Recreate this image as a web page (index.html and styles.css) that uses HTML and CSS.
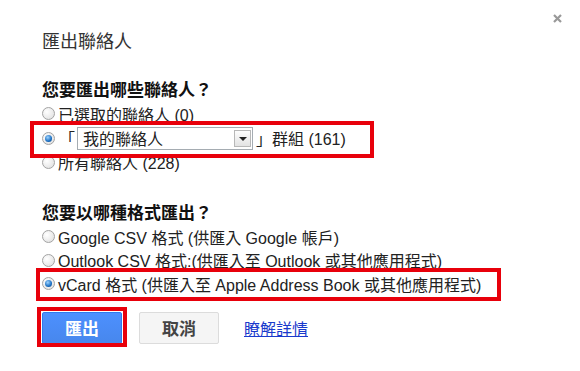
FILE: index.html
```html
<!DOCTYPE html>
<html lang="zh-Hant">
  <head>
    <meta charset="UTF-8" />
    <meta name="viewport" content="width=device-width, initial-scale=1.0" />
    <title>匯出聯絡人</title>
    <link rel="stylesheet" href="styles.css">
  </head>
  <body>
    <div class="dialog">
      <span class="close">
        <svg width="9" height="9" viewBox="0 0 9 9">
          <path d="M1 1 L8 8 M8 1 L1 8" stroke="#999" stroke-width="2.2" />
        </svg>
      </span>
      <div class="title">匯出聯絡人</div>

      <div class="question">您要匯出哪些聯絡人？</div>
      <div class="option"><span class="radio"></span>已選取的聯絡人 (0)</div>
      <div class="option group">
        <span class="radio on"></span>
        <span class="bracket">「</span>
        <div class="select">
          <span class="value">我的聯絡人</span>
          <span class="arrow"></span>
        </div>
        <span class="bracket end">」</span><span>群組 (161)</span>
      </div>
      <div class="option"><span class="radio"></span>所有聯絡人 (228)</div>

      <div class="question second">您要以哪種格式匯出？</div>
      <div class="option"><span class="radio"></span>Google CSV 格式 (供匯入 Google 帳戶)</div>
      <div class="option"><span class="radio"></span>Outlook CSV 格式:(供匯入至 Outlook 或其他應用程式)</div>
      <div class="option"><span class="radio on"></span>vCard 格式 (供匯入至 Apple Address Book 或其他應用程式)</div>

      <div class="actions">
        <button class="btn primary">匯出</button>
        <button class="btn">取消</button>
        <a href="#" class="more">瞭解詳情</a>
      </div>

      <!-- red highlight boxes drawn over the dialog -->
      <div class="mark mark-group"></div>
      <div class="mark mark-vcard"></div>
      <div class="mark mark-export"></div>
    </div>
  </body>
</html>
```

FILE: styles.css
```css
body {
  margin: 0;
  background: #fff;
  font-family: "Liberation Sans", "Noto Sans CJK TC", sans-serif;
  color: #222;
}
.dialog {
  position: relative;
  width: 580px;
  height: 371px;
  padding: 30px 0 0 42px;
  box-sizing: border-box;
}
.close {
  position: absolute;
  top: 14px;
  left: 553px;
  line-height: 0;
}
.title {
  font-size: 18px;
  line-height: 24px;
  color: #333;
}
.question {
  margin-top: 26px;
  font-size: 17px;
  line-height: 22px;
  font-weight: bold;
  color: #111;
}
.question.second {
  margin-top: 29px;
}
.option {
  display: flex;
  align-items: center;
  height: 23.5px;
  font-size: 16px;
  color: #222;
  white-space: nowrap;
}
.option.group {
  height: 25px;
}
.radio {
  width: 11px;
  height: 11px;
  border: 1px solid #a3a3a3;
  border-radius: 50%;
  margin-right: 3px;
  background: radial-gradient(circle at 35% 35%, #fff, #dcdcdc);
  position: relative;
  flex: none;
}
.radio.on::after {
  content: "";
  position: absolute;
  left: 2px;
  top: 2px;
  width: 7px;
  height: 7px;
  border-radius: 50%;
  background: radial-gradient(circle at 40% 35%, #9fd4ff, #1a6fc2 60%, #0b3f7a);
}
.bracket {
  margin: 0 2px 0 1px;
}
.bracket.end {
  margin: 0 0 0 1px;
}
.select {
  display: flex;
  align-items: center;
  width: 174px;
  height: 21px;
  border: 1px solid #a5acb2;
  background: #fff;
  margin-right: 2px;
}
.select .value {
  flex: 1;
  padding-left: 5px;
  font-size: 16px;
}
.select .arrow {
  width: 17px;
  height: 17px;
  margin-right: 1px;
  border: 1px solid #b8b8b8;
  box-sizing: border-box;
  background: linear-gradient(#fdfdfd, #e3e3e3);
  position: relative;
}
.select .arrow::after {
  content: "";
  position: absolute;
  left: 4px;
  top: 6px;
  border-left: 4px solid transparent;
  border-right: 4px solid transparent;
  border-top: 4px solid #222;
}
.actions {
  display: flex;
  align-items: center;
  margin-top: 16px;
}
.btn {
  height: 32px;
  min-width: 80px;
  padding: 0 12px;
  font-family: inherit;
  font-size: 17px;
  font-weight: bold;
  color: #444;
  background: #f5f5f5;
  border: 1px solid #dcdcdc;
  border-radius: 2px;
  margin-right: 17px;
}
.btn.primary {
  color: #fff;
  background: linear-gradient(#4d90fe, #4787ed);
  border: 1px solid #3079ed;
}
.more {
  font-size: 16px;
  color: #1a3acc;
  text-decoration: underline;
  margin-left: 8px;
}
.mark {
  position: absolute;
  border: 4px solid #e8000b;
}
.mark-group {
  left: 30px;
  top: 121px;
  width: 336px;
  height: 29px;
}
.mark-vcard {
  left: 36px;
  top: 268px;
  width: 457px;
  height: 25px;
}
.mark-export {
  left: 37px;
  top: 307px;
  width: 82px;
  height: 32px;
}
```
